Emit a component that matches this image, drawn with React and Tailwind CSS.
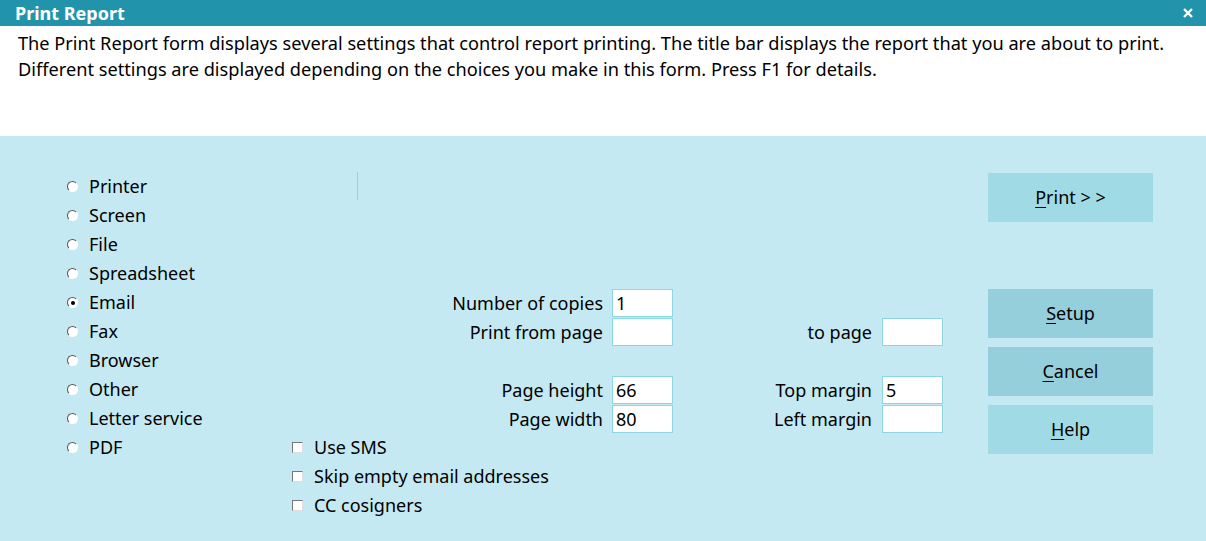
import React from "react";

const font = { fontFamily: '"Noto Sans", "Open Sans", sans-serif' };

function Radio({ label, checked }) {
  return (
    <div className="flex h-[29px] items-center">
      <span className="relative flex h-[11px] w-[11px] items-center justify-center rounded-full border border-t-[#555] border-l-[#555] border-r-white border-b-white bg-white">
        {checked && <span className="h-[4px] w-[4px] rounded-full bg-black" />}
      </span>
      <span className="ml-[11px]">{label}</span>
    </div>
  );
}

function Check({ label }) {
  return (
    <div className="flex h-[29px] items-center">
      <span className="h-[11px] w-[11px] border border-t-[#777] border-l-[#777] border-r-[#ddd] border-b-[#ddd] bg-white" />
      <span className="ml-[11px]">{label}</span>
    </div>
  );
}

function Field({ value }) {
  return (
    <div className="flex h-[28px] w-[61px] items-center border border-[#8fd6e3] bg-white pl-[3px] leading-none">
      {value}
    </div>
  );
}

function Row({ l1, v1, l2, v2, show2 }) {
  return (
    <div className="flex h-[29px] items-start">
      <div className="flex h-[28px] w-[318px] items-center justify-end whitespace-nowrap">{l1}</div>
      <div className="ml-[9px]">
        <Field value={v1} />
      </div>
      {show2 && (
        <>
          <div className="flex h-[28px] w-[199px] items-center justify-end whitespace-nowrap">{l2}</div>
          <div className="ml-[10px]">
            <Field value={v2} />
          </div>
        </>
      )}
    </div>
  );
}

function Btn({ u, rest, dark }) {
  return (
    <button
      className={
        "flex h-[49px] w-[165px] items-center justify-center text-black " +
        (dark ? "bg-[#94cfdb]" : "bg-[#a0dbe5]")
      }
    >
      <span>
        <span className="underline underline-offset-[3px]">{u}</span>
        {rest}
      </span>
    </button>
  );
}

export default function App() {
  return (
    <div className="flex h-[541px] w-[1206px] flex-col overflow-hidden text-[18px] text-black" style={font}>
      <div className="flex h-[26px] items-center justify-between bg-[#2194ab] pl-[15px] pr-[13px] text-white">
        <span className="text-[18px] font-bold">Print Report</span>
        <svg width="10" height="10" viewBox="0 0 10 10">
          <path d="M1 1L9 9M9 1L1 9" stroke="white" strokeWidth="2.4" />
        </svg>
      </div>
      <div className="h-[110px] bg-white pl-[18px] pt-[4px] text-[18.2px] leading-[26px]">
        <div>
          The Print Report form displays several settings that control report printing. The title bar displays the report that you are about to print.
        </div>
        <div>Different settings are displayed depending on the choices you make in this form. Press F1 for details.</div>
      </div>
      <div className="flex flex-1 bg-[#c5e9f2]">
        <div className="w-[285px] shrink-0 pl-[67px] pt-[36px]">
          {["Printer", "Screen", "File", "Spreadsheet"].map((l) => (
            <Radio key={l} label={l} />
          ))}
          <Radio label="Email" checked />
          {["Fax", "Browser", "Other", "Letter service", "PDF"].map((l) => (
            <Radio key={l} label={l} />
          ))}
        </div>
        <div className="flex w-[703px] shrink-0 flex-col pt-[36px]">
          <div className="ml-[72px] h-[28px] w-px bg-[#9fcfd9]" />
          <div className="h-[89px]" />
          <div>
            <Row l1="Number of copies" v1="1" />
            <Row l1="Print from page" v1="" l2="to page" v2="" show2 />
            <div className="h-[29px]" />
            <Row l1="Page height" v1="66" l2="Top margin" v2="5" show2 />
            <Row l1="Page width" v1="80" l2="Left margin" v2="" show2 />
          </div>
          <div className="-mt-px ml-[7px]">
            <Check label="Use SMS" />
            <Check label="Skip empty email addresses" />
            <Check label="CC cosigners" />
          </div>
        </div>
        <div className="flex flex-col pt-[37px]">
          <Btn u="P" rest="rint > >" />
          <div className="h-[67px]" />
          <div className="flex flex-col gap-[9px]">
            <Btn u="S" rest="etup" dark />
            <Btn u="C" rest="ancel" dark />
            <Btn u="H" rest="elp" />
          </div>
        </div>
      </div>
    </div>
  );
}
